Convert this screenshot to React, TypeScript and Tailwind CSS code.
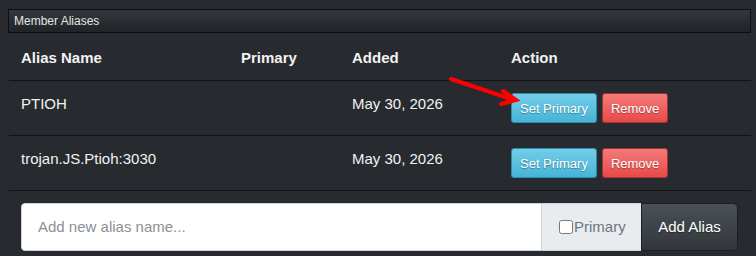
import React from "react";

const rows = [
  { name: "PTIOH", added: "May 30, 2026" },
  { name: "trojan.JS.Ptioh:3030", added: "May 30, 2026" },
];

export default function App() {
  return (
    <div className="relative w-[756px] h-[256px] overflow-hidden bg-[#272b30] pt-[9px] pl-[8px] pr-[5px] font-['Liberation_Sans',Arial,sans-serif]">
      {/* Section header */}
      <div className="h-[24px] flex items-center border border-[#0d0e10] bg-gradient-to-b from-[#34383d] to-[#202327] pl-[5px] text-[12px] text-[#e4e4e4]">
        Member Aliases
      </div>

      {/* Alias table */}
      <table className="ml-[1px] mt-[2px] w-[742px] border-collapse text-[15px] leading-[21px] text-[#f2f2f2]">
        <colgroup>
          <col className="w-[220px]" />
          <col className="w-[111px]" />
          <col className="w-[159px]" />
          <col />
        </colgroup>
        <thead>
          <tr className="border-b border-[#121315]">
            <th className="p-[12px] text-left font-bold">Alias Name</th>
            <th className="p-[12px] text-left font-bold">Primary</th>
            <th className="p-[12px] text-left font-bold">Added</th>
            <th className="p-[12px] text-left font-bold">Action</th>
          </tr>
        </thead>
        <tbody>
          {rows.map((r) => (
            <tr key={r.name} className="border-b border-[#121315]">
              <td className="p-[12px] align-top">{r.name}</td>
              <td className="p-[12px] align-top"></td>
              <td className="p-[12px] align-top">{r.added}</td>
              <td className="p-[12px] align-top">
                <div className="flex gap-[5px]">
                  <button className="h-[30px] px-[8px] rounded-[3px] border border-[#2b8cab] bg-gradient-to-b from-[#72cde8] to-[#45b4d7] text-[13px] text-white [text-shadow:0_1px_1px_rgba(0,0,0,0.35)]">
                    Set Primary
                  </button>
                  <button className="h-[30px] px-[8px] rounded-[3px] border border-[#a83232] bg-gradient-to-b from-[#f27a7a] to-[#e84848] text-[13px] text-white [text-shadow:0_1px_1px_rgba(0,0,0,0.35)]">
                    Remove
                  </button>
                </div>
              </td>
            </tr>
          ))}
        </tbody>
      </table>

      {/* Add alias form */}
      <div className="ml-[13px] mt-[12px] flex h-[48px] w-[717px]">
        <input
          className="flex-1 min-w-0 rounded-l-[4px] border border-[#ced4da] bg-white px-[16px] text-[15px] text-[#333] placeholder:text-[#8a9096] outline-none"
          placeholder="Add new alias name..."
        />
        <label className="flex items-center w-[99px] bg-[#e9ecef] border-y border-[#ced4da] pl-[17px] text-[15px] text-[#6c757d]">
          <input type="checkbox" className="m-0 w-[14px] h-[14px]" />
          <span className="ml-[1px]">Primary</span>
        </label>
        <button className="w-[97px] rounded-r-[5px] border border-[#1c1e22] bg-gradient-to-b from-[#4a5056] to-[#33373c] text-[15px] text-white [text-shadow:0_1px_1px_rgba(0,0,0,0.4)]">
          Add Alias
        </button>
      </div>

      {/* Red annotation arrow */}
      <svg
        className="absolute left-0 top-0 pointer-events-none"
        width="756"
        height="256"
        viewBox="0 0 756 256"
      >
        <line x1="451" y1="79" x2="514" y2="100" stroke="#ff0000" strokeWidth="4" strokeLinecap="round" />
        <polyline
          points="503,91 516,100 501,104"
          fill="none"
          stroke="#ff0000"
          strokeWidth="4"
          strokeLinecap="round"
          strokeLinejoin="miter"
        />
      </svg>
    </div>
  );
}
